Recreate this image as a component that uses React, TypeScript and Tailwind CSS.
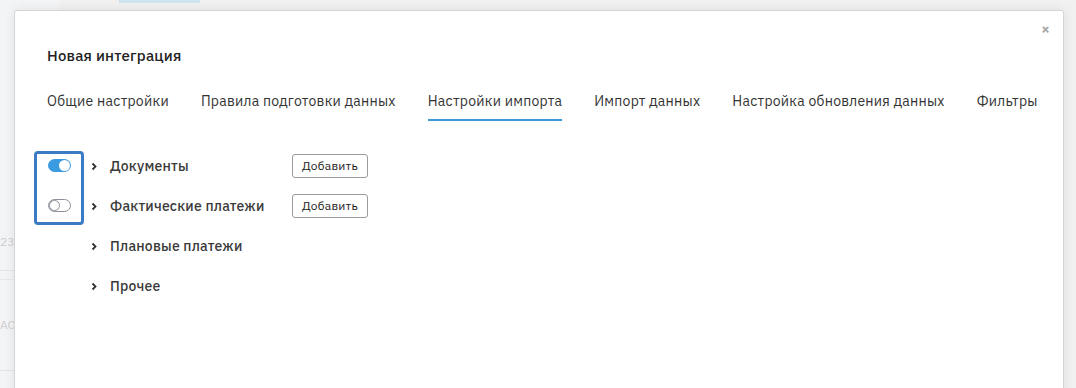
import { useState } from "react";

const FONT = { fontFamily: '"IBM Plex Sans", Roboto, "Noto Sans", sans-serif' };

const tabs = [
  "Общие настройки",
  "Правила подготовки данных",
  "Настройки импорта",
  "Импорт данных",
  "Настройка обновления данных",
  "Фильтры",
];

type Section = { id: string; label: string; toggle?: boolean };

const sections: Section[] = [
  { id: "docs", label: "Документы", toggle: true },
  { id: "fact", label: "Фактические платежи", toggle: true },
  { id: "plan", label: "Плановые платежи" },
  { id: "other", label: "Прочее" },
];

function Toggle({ on, onClick }: { on: boolean; onClick: () => void }) {
  return (
    <button
      type="button"
      onClick={onClick}
      className={[
        "relative h-[13px] w-[23px] rounded-full border",
        on ? "border-[#3a9be0] bg-[#3a9be0]" : "border-[#8a8f99] bg-white",
      ].join(" ")}
    >
      <span
        className={[
          "absolute top-[0px] h-[11px] w-[11px] rounded-full bg-white",
          on ? "right-[0px]" : "left-[0px] border border-[#8a8f99]",
        ].join(" ")}
      />
    </button>
  );
}

function Chevron() {
  return (
    <svg width="8" height="9" viewBox="0 0 8 9" className="shrink-0">
      <path d="M2.5 1.5 L5.5 4.5 L2.5 7.5" fill="none" stroke="#333" strokeWidth="1.8" />
    </svg>
  );
}

export default function App() {
  const [active, setActive] = useState(2);
  const [enabled, setEnabled] = useState<Record<string, boolean>>({
    docs: true,
    fact: false,
  });

  return (
    <div className="relative h-[388px] w-[1076px] overflow-hidden bg-[#f1f1f2]" style={FONT}>
      {/* page behind the overlay */}
      <div className="flex h-full">
        <div className="flex w-[60px] flex-col bg-[#f3f4f6]">
          <div className="h-[228px]" />
          <div className="h-[28px] text-[12px] leading-[28px] text-[#cfcfcf]">238</div>
          <div className="h-[15px] border-b border-[#e4e4e4]" />
          <div className="h-[9px] border-b border-[#e8e8e8]" />
          <div className="flex h-[90px] items-center text-[12px] text-[#cfcfcf]">AC</div>
          <div className="border-b border-[#e4e4e4]" />
        </div>
        <div className="flex-1">
          <div className="ml-[59px] h-[3px] w-[81px] bg-[#cfe3f1]" />
        </div>
      </div>

      {/* modal */}
      <div className="absolute left-[14px] top-[10px] h-[400px] w-[1050px] rounded-[3px] border border-[#d4d4d4] bg-white shadow-[0_0_12px_rgba(0,0,0,0.08)]">
        <button
          type="button"
          className="absolute right-[13px] top-[10px] text-[15px] font-bold leading-none text-[#a9a9a9]"
        >
          ×
        </button>

        <div className="flex flex-col pl-[32px] pt-[34px]">
          <h1 className="text-[15px] font-medium leading-[22px] tracking-[0.2px] text-[#222]">
            Новая интеграция
          </h1>

          <nav className="mt-[22px] flex gap-[32px]">
            {tabs.map((tab, i) => (
              <button
                key={tab}
                type="button"
                onClick={() => setActive(i)}
                className={[
                  "border-b-2 pb-[8px] pt-[2px] text-[14px] leading-[20px] tracking-[0.25px] text-[#333]",
                  active === i ? "border-[#3a9ad9]" : "border-transparent",
                ].join(" ")}
              >
                {tab}
              </button>
            ))}
          </nav>

          <div className="mt-[30px] flex">
            <div className="-ml-[13px] flex h-[74px] w-[50px] flex-col items-center gap-[27px] rounded-[4px] border-[3px] border-[#3a7bc4] pt-[5px]">
              <Toggle on={enabled.docs} onClick={() => setEnabled((e) => ({ ...e, docs: !e.docs }))} />
              <Toggle on={enabled.fact} onClick={() => setEnabled((e) => ({ ...e, fact: !e.fact }))} />
            </div>
            <div className="-mt-[5px] ml-[6px] flex flex-col">
              {sections.map((s) => (
                <div key={s.id} className="flex h-[40px] items-center">
                  <Chevron />
                  <span className="ml-[12px] w-[182px] text-[14px] font-medium tracking-[0.2px] text-[#3a3a3a]">
                    {s.label}
                  </span>
                  {s.toggle && (
                    <button
                      type="button"
                      className="h-[24px] rounded-[3px] border border-[#9a9a9a] px-[9px] text-[12px] tracking-[0.2px] text-[#222]"
                    >
                      Добавить
                    </button>
                  )}
                </div>
              ))}
            </div>
          </div>
        </div>
      </div>
    </div>
  );
}
